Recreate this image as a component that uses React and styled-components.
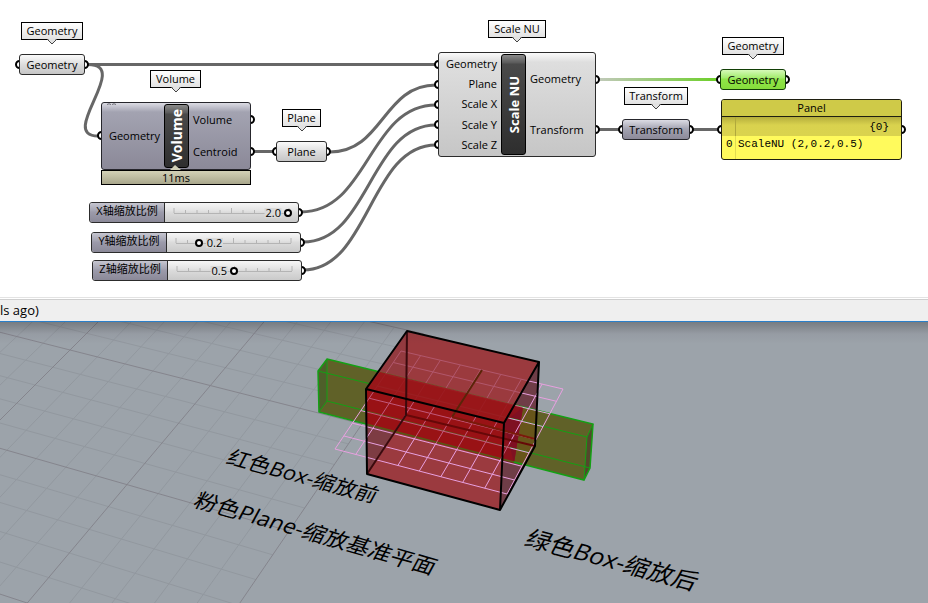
import React, { useState } from "react";
import styled, { createGlobalStyle, css } from "styled-components";

const GlobalStyle = createGlobalStyle`
  *, *::before, *::after { box-sizing: border-box; }
  body {
    margin: 0;
    background: #fff;
    color: #000;
    font: 11px/16px "Open Sans", "Noto Sans CJK SC", sans-serif;
  }
`;

const Page = styled.div`
  display: flex;
  flex-direction: column;
  min-height: 100vh;
  overflow: hidden;
`;

/* ---------- node canvas ---------- */

const Canvas = styled.main`
  position: relative;
  flex: none;
  height: 298px;
  overflow: hidden;
  border-bottom: 1px solid #e3e3e3;
`;

const WireLayer = styled.svg`
  display: block;
  width: 100%;
  height: 100%;
  fill: none;
  stroke: #676767;
  stroke-width: 3;
`;

const Placed = styled.div`
  position: absolute;
  left: ${(p) => p.$x}px;
  top: ${(p) => p.$y}px;
`;

const tones = {
  plain: "#2c2c2c, #fafafa, #e2e2e2, #dedede, #c6c6c6",
  hidden: "#26262c, #dcdce4, #a9a9b7, #a3a3b1, #8b8998",
  selected: "#123f06, #d6f9b8, #a2ec6c, #8fe548, #86dc3c",
};

const toneStyle = css`
  ${(p) => {
    const [edge, a, b, c, d] = tones[p.$tone || "plain"].split(", ");
    return `border: 1px solid ${edge};
      background: linear-gradient(${a}, ${b} 8px, ${c} 9px, ${d});`;
  }}
`;

const Grip = styled.span`
  position: absolute;
  top: ${(p) => p.$y - 5}px;
  ${(p) => (p.$out ? "right" : "left")}: -4px;
  width: 9px;
  height: 9px;
  border: 2px solid #000;
  border-radius: 50%;
  background: #fff;
`;

const ParamBody = styled.div`
  position: relative;
  height: 21px;
  padding: 2px 6px;
  border-radius: 3px;
  text-align: center;
  width: ${(p) => p.$w}px;
  ${toneStyle}
`;

const TagStack = styled(Placed)`
  display: flex;
  flex-direction: column;
  align-items: center;
`;

const TagBody = styled.div`
  height: 18px;
  width: ${(p) => p.$w}px;
  border: 1px solid #000;
  background: linear-gradient(#fff, #e2e2e2);
  text-align: center;
`;

const TagTip = styled.svg`
  display: block;
  margin-top: -2px;
  width: 12px;
  height: 7px;
`;

const ComponentBody = styled.div`
  position: relative;
  display: flex;
  width: ${(p) => p.$w}px;
  height: ${(p) => p.$h}px;
  padding: 1px 4px 1px 6px;
  border-radius: 3px;
  gap: 4px;
  ${toneStyle}
`;

const Ports = styled.ul`
  flex: ${(p) => (p.$out ? "1" : "0 0 auto")};
  min-width: 52px;
  display: flex;
  flex-direction: column;
  justify-content: space-around;
  margin: 0;
  padding: 0;
  list-style: none;
  text-align: ${(p) => (p.$out ? "left" : "right")};
`;

const NameStrip = styled.div`
  flex: none;
  width: 25px;
  display: flex;
  align-items: center;
  justify-content: center;
  border: 1px solid #000;
  border-radius: 3px;
  background: linear-gradient(#8a8a8a, #5a5a5a 8px, #4a4a4a 9px, #2e2e2e);
`;

const StripText = styled.span`
  writing-mode: vertical-rl;
  transform: rotate(180deg);
  color: #fff;
  font-size: ${(p) => (p.$small ? 13 : 14)}px;
  font-weight: 700;
  line-height: 20px;
`;

const Timing = styled.div`
  height: 15px;
  line-height: 13px;
  border: 1px solid #000;
  background: linear-gradient(#d3d1b6, #a9a78c);
  text-align: center;
`;

const TimingTip = styled.svg`
  position: absolute;
  bottom: -1px;
  left: calc(50% - 6px);
  width: 11px;
  height: 5px;
  fill: #d3d1b6;
`;

const Squiggle = styled.svg`
  position: absolute;
  left: 5px;
  top: 0;
  width: 9px;
  height: 3px;
  fill: none;
  stroke: #6b6b74;
`;

/* ---------- panel ---------- */

const PanelBody = styled.section`
  position: relative;
  width: 181px;
  height: 61px;
  border: 1px solid #1f1f10;
  border-radius: 3px;
  overflow: hidden;
  background: #fffa5c;
`;

const PanelTitle = styled.h2`
  margin: 0;
  height: 17px;
  border-bottom: 1px solid #1f1f10;
  background: #cfca48;
  font-size: 11px;
  font-weight: 400;
  line-height: 16px;
  text-align: center;
`;

const PanelLine = styled.div`
  display: grid;
  grid-template-columns: 14px 1fr;
  height: ${(p) => (p.$path ? 19 : 24)}px;
  background: ${(p) => (p.$path ? "linear-gradient(#b5ae3c, #d9d24e 8px, #dad34e)" : "none")};
  font: 11px/${(p) => (p.$path ? 20 : 16)}px "Liberation Mono", monospace;
  text-align: ${(p) => (p.$path ? "right" : "left")};

  & > :first-child {
    padding-left: 4px;
    border-right: 1px solid ${(p) => (p.$path ? "#b0a93c" : "#e0da50")};
  }
  & > :last-child {
    padding: ${(p) => (p.$path ? "0 12px 0 0" : "0 0 0 2px")};
  }
`;

/* ---------- sliders ---------- */

const SliderBody = styled.div`
  position: relative;
  display: flex;
  width: 210px;
  height: 21px;
  border: 1px solid #2c2c2c;
  border-radius: 3px;
  overflow: hidden;
  background: linear-gradient(#f6f6f6, #e2e2e2 8px, #dcdcdc 9px, #cacaca);
`;

const SliderLabel = styled.label`
  width: 75px;
  flex: none;
  border-right: 1px solid #2c2c2c;
  background: linear-gradient(#c6c6d0, #a3a3b1 8px, #9c9bab 9px, #8b8998);
  text-align: center;
  white-space: nowrap;
`;

const Track = styled.div`
  position: relative;
  display: grid;
  align-items: center;
  width: 114px;
  margin-left: 9px;
  & > * { grid-area: 1 / 1; }
`;

const Ticks = styled.svg`
  width: 115px;
  height: 11px;
  stroke: #b4b4b4;
  overflow: visible;
`;

const Range = styled.input`
  width: 122px;
  height: 9px;
  margin: 0 -4px;
  appearance: none;
  background: none;
  z-index: 1;
  &::-webkit-slider-thumb {
    appearance: none;
    width: 8px;
    height: 8px;
    border: 2px solid #000;
    border-radius: 50%;
    background: #fff;
  }
`;

const Value = styled.output`
  position: absolute;
  padding: 0 1px;
  background: #d9d9d9;
  transform: translateX(${(p) => (p.$after ? "7px" : "calc(-100% - 6px)")});
  line-height: 10px;
`;

/* ---------- status bar and viewport ---------- */

const StatusBar = styled.footer`
  flex: none;
  height: 23px;
  margin-top: 1px;
  border-top: 1px solid #cfcfcf;
  border-bottom: 1px solid #2a7fc9;
  background: #efefef;
  font-size: 13px;
  line-height: 21px;
`;

const Viewport = styled.section`
  display: grid;
  flex: 1;
  min-height: 280px;
  background: #9ca3aa;
  & > *, &::after { grid-area: 1 / 1; }
  &::after {
    content: "";
    height: 22px;
    background: linear-gradient(rgba(0, 0, 0, 0.24), rgba(60, 40, 60, 0.06) 12px, transparent);
  }
`;

const Scene = styled.svg`
  display: block;
  width: 100%;
  height: 100%;
  fill: none;
`;

const GroundLabel = styled.text`
  fill: #000;
  font-family: "Open Sans", "Noto Sans CJK SC", sans-serif;
  font-size: ${(p) => p.$size}px;
`;

/* Projects the unit square onto a quadrilateral. */
function projector([p0, p1, p2, p3]) {
  const dx1 = p1[0] - p2[0], dy1 = p1[1] - p2[1];
  const dx2 = p3[0] - p2[0], dy2 = p3[1] - p2[1];
  const sx = p0[0] - p1[0] + p2[0] - p3[0];
  const sy = p0[1] - p1[1] + p2[1] - p3[1];
  const den = dx1 * dy2 - dx2 * dy1;
  const g = (sx * dy2 - dx2 * sy) / den;
  const h = (dx1 * sy - sx * dy1) / den;
  return (u, v) => {
    const w = g * u + h * v + 1;
    return [
      ((p1[0] - p0[0] + g * p1[0]) * u + (p3[0] - p0[0] + h * p3[0]) * v + p0[0]) / w,
      ((p1[1] - p0[1] + g * p1[1]) * u + (p3[1] - p0[1] + h * p3[1]) * v + p0[1]) / w,
    ];
  };
}

const segment = (a, b) => `M${a[0]} ${a[1]}L${b[0]} ${b[1]}`;

/* Ground grid: ten cells wide from u = 0 to 1, five cells deep from v = 0 to 1. */
const ground = projector([[70, 350], [362, 424], [289, 531], [-22, 442]]);
const groundLines = { minor: "", major: "" };
for (let i = -10; i <= 10; i++) {
  groundLines[i % 5 === 0 ? "major" : "minor"] += segment(ground(i / 10, -1), ground(i / 10, 2.4));
}
for (let j = -5; j <= 12; j++) {
  groundLines[j % 5 === 0 ? "major" : "minor"] += segment(ground(-1, j / 5), ground(1, j / 5));
}

const plane = projector([[401, 351], [563, 389], [507, 494], [335, 449]]);
let planeLines = "";
for (let i = 0; i <= 8; i++) {
  planeLines += segment(plane(i / 8, 0), plane(i / 8, 1)) + segment(plane(0, i / 8), plane(1, i / 8));
}

function Wires() {
  const link = (x1, y1, x2, y2) => {
    const m = (x1 + x2) / 2;
    return `M${x1} ${y1}C${m} ${y1} ${m} ${y2} ${x2} ${y2}`;
  };
  return (
    <WireLayer aria-hidden="true">
      <defs>
        <linearGradient id="activeWire" gradientUnits="userSpaceOnUse" x1="600" y1="0" x2="718" y2="0">
          <stop offset="0" stopColor="#c0c9b8" />
          <stop offset="1" stopColor="#6ccf28" />
        </linearGradient>
      </defs>
      <path d="M88 64.5H436" />
      <path d="M88 64.5C132 64.5 57 136 98 136" />
      <path d="M253 151.5H274" />
      <path d={link(330, 152, 436, 85)} />
      <path d={link(301, 212, 436, 105)} />
      <path d={link(303, 242, 436, 125)} />
      <path d={link(303, 270, 436, 145)} />
      <path d="M598 129.5H620M692 129.5H719" />
      <path d="M598 79.5H718" stroke="url(#activeWire)" />
    </WireLayer>
  );
}

function Param({ x, y, w, tone, children }) {
  return (
    <Placed $x={x} $y={y}>
      <Grip $y={11} />
      <Grip $y={11} $out />
      <ParamBody $w={w} $tone={tone}>{children}</ParamBody>
    </Placed>
  );
}

function Tag({ x, y, w, children }) {
  return (
    <TagStack $x={x} $y={y}>
      <TagBody $w={w}>{children}</TagBody>
      <TagTip viewBox="0 0 12 7" aria-hidden="true">
        <path d="M1 0L6 6L11 0Z" fill="#e2e2e2" />
        <path d="M1 1L6 6L11 1" fill="none" stroke="#444" />
      </TagTip>
    </TagStack>
  );
}

function Component({ x, y, w, h, name, tone, inputs, outputs, small, time }) {
  return (
    <Placed $x={x} $y={y}>
      {inputs.map(([label, gy]) => <Grip key={label} $y={gy} />)}
      {outputs.map(([label, gy]) => <Grip key={label} $y={gy} $out />)}
      <ComponentBody $w={w} $h={h} $tone={tone}>
        <Ports>{inputs.map(([label]) => <li key={label}>{label}</li>)}</Ports>
        <NameStrip><StripText $small={small}>{name}</StripText></NameStrip>
        <Ports $out>{outputs.map(([label]) => <li key={label}>{label}</li>)}</Ports>
        {time && (
          <>
            <Squiggle viewBox="0 0 9 3" aria-hidden="true">
              <path d="M0 1.5Q2 0 4 1.5M5 1.5Q7 0 9 1.5" />
            </Squiggle>
            <TimingTip viewBox="0 0 11 5" aria-hidden="true"><path d="M0 5L5 0L11 5Z" /></TimingTip>
          </>
        )}
      </ComponentBody>
      {time && <Timing>{time}</Timing>}
    </Placed>
  );
}

function NumberSlider({ id, x, y, label, max, initial, after }) {
  const [value, setValue] = useState(initial);
  return (
    <Placed $x={x} $y={y}>
      <Grip $y={11} $out />
      <SliderBody>
        <SliderLabel htmlFor={id}>{label}</SliderLabel>
        <Track>
          <Ticks aria-hidden="true">
            <line x1="0" x2="100%" y1="6.5" y2="6.5" />
            {Array.from({ length: 11 }, (_, i) => (
              <line key={i} x1={`${i * 10}%`} x2={`${i * 10}%`} y1={i % 5 ? 3 : 1} y2="6" />
            ))}
          </Ticks>
          <Value htmlFor={id} $after={after} style={{ left: `${(value / max) * 100}%` }}>
            {value.toFixed(1)}
          </Value>
          <Range
            id={id}
            type="range"
            min="0"
            max={max}
            step="0.1"
            value={value}
            onChange={(e) => setValue(Number(e.target.value))}
          />
        </Track>
      </SliderBody>
    </Placed>
  );
}

function Model() {
  return (
    <Scene viewBox="0 322 928 281" preserveAspectRatio="xMinYMin slice" role="img" aria-label="3D view">
      <path d={groundLines.minor} stroke="#92989f" />
      <path d={groundLines.major} stroke="#85858d" />

      <path d="M327 359L593 424L590 468L584 480L319 412L318 371Z" fill="#606128" />
      <path d="M327 359L318 371L319 412L327 401Z" fill="#4e5f2a" />
      <path d="M593 424L587 437L584 480L590 468Z" fill="#53472c" />

      <path d="M407 331L539 362L504 423L500 510L367 474L366 389Z" fill="#9b3a3f" />
      <path d="M407 331L366 389L367 474L406 415Z" fill="#7d3c43" />
      <path d="M539 362L504 423L500 510L535 446Z" fill="#6f3d47" />
      <path d="M523 407L538 411L535 446L524 466L514 463Z" fill="#67551a" />
      <path d="M380 372L523 407L514 463L502 460L367 425L366 389Z" fill="#991215" />
      <path d="M504 423L515 404L523 407L514 463L502 460Z" fill="#7f1022" />

      <g stroke="#14a014">
        <path d="M327 359L593 424L590 468L584 480L319 412L318 371Z" strokeWidth="1.5" />
        <path d="M318 371L587 437L593 424M587 437L584 480M327 359V401L319 412M327 401L590 468" />
      </g>

      <path d={planeLines} stroke="#e8a0e0" />
      <path d="M407 331L539 362L504 423L366 389Z" fill="#9b3a3f" fillOpacity="0.72" />
      <path d="M380 372L523 407L504 423L514 463L367 425L366 389Z" fill="#991215" fillOpacity="0.5" />
      <path d="M380 372L515 405L504 423L366 389Z" fill="#991215" fillOpacity="0.7" />

      <path d="M452 417L482 370" stroke="#5a2408" strokeWidth="2" />
      <path d="M452 417L535 439" stroke="#7a1a0a" strokeWidth="2" />
      <path d="M406 415L535 446" stroke="#660808" strokeWidth="2" />
      <path d="M407 331L406 415L367 474" stroke="#3a0a0d" strokeWidth="2" />
      <path
        d="M407 331L539 362L504 423L366 389ZM366 389L367 474L500 510L504 423M539 362L535 446L500 510"
        stroke="#000"
        strokeWidth="2"
        strokeLinejoin="round"
      />

      <GroundLabel $size={21} transform="translate(225 463) skewY(15) skewX(-25)">红色Box-缩放前</GroundLabel>
      <GroundLabel $size={22} transform="translate(192 506) skewY(16) skewX(-25)">粉色Plane-缩放基准平面</GroundLabel>
      <GroundLabel $size={24} transform="translate(523 545) skewY(15) skewX(-25)">绿色Box-缩放后</GroundLabel>
    </Scene>
  );
}

export default function App() {
  return (
    <Page>
      <GlobalStyle />
      <Canvas>
        <Wires />

        <Tag x={21} y={22} w={62}>Geometry</Tag>
        <Param x={19} y={54} w={66}>Geometry</Param>

        <Tag x={150} y={70} w={51}>Volume</Tag>
        <Component
          x={101} y={102} w={150} h={68} name="Volume" tone="hidden" time="11ms"
          inputs={[["Geometry", 34]]}
          outputs={[["Volume", 18], ["Centroid", 50]]}
        />

        <Tag x={282} y={109} w={39}>Plane</Tag>
        <Param x={276} y={141} w={51}>Plane</Param>

        <NumberSlider id="scale-x" x={89} y={202} label="X轴缩放比例" max={2} initial={2} />
        <NumberSlider id="scale-y" x={91} y={232} label="Y轴缩放比例" max={1} initial={0.2} after />
        <NumberSlider id="scale-z" x={92} y={260} label="Z轴缩放比例" max={1} initial={0.5} />

        <Tag x={488} y={20} w={58}>Scale NU</Tag>
        <Component
          x={438} y={52} w={158} h={105} name="Scale NU" small
          inputs={[["Geometry", 13], ["Plane", 33], ["Scale X", 53], ["Scale Y", 73], ["Scale Z", 93]]}
          outputs={[["Geometry", 28], ["Transform", 78]]}
        />

        <Tag x={722} y={37} w={62}>Geometry</Tag>
        <Param x={720} y={69} w={66} tone="selected">Geometry</Param>

        <Tag x={624} y={87} w={64}>Transform</Tag>
        <Param x={622} y={119} w={68} tone="hidden">Transform</Param>

        <Placed $x={721} $y={99}>
          <Grip $y={31} />
          <Grip $y={31} $out />
          <PanelBody>
            <PanelTitle>Panel</PanelTitle>
            <PanelLine $path><span /><span>{"{0}"}</span></PanelLine>
            <PanelLine><span>0</span><span>ScaleNU (2,0.2,0.5)</span></PanelLine>
          </PanelBody>
        </Placed>
      </Canvas>
      <StatusBar>ls ago)</StatusBar>
      <Viewport><Model /></Viewport>
    </Page>
  );
}
